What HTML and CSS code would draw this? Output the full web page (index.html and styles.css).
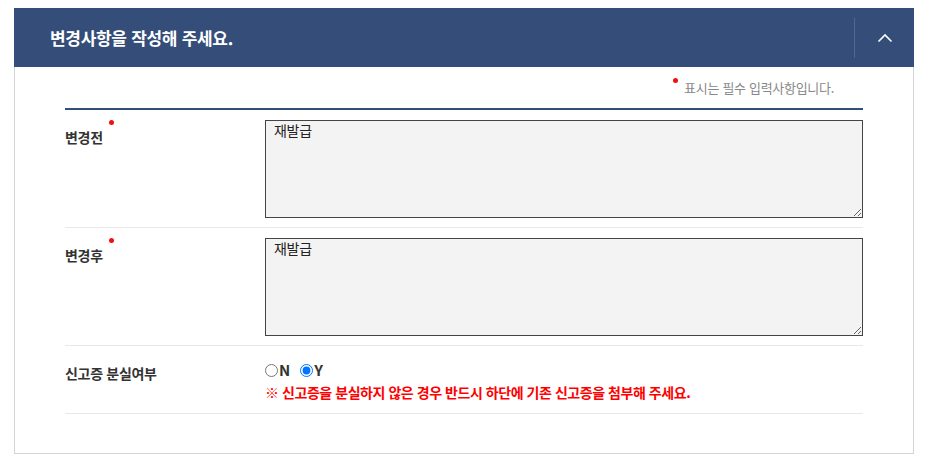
FILE: index.html
```html
<!DOCTYPE html>
<html lang="ko">
<head>
<meta charset="utf-8">
<title>변경사항</title>
<link rel="stylesheet" href="styles.css">
</head>
<body>
<div class="wrap">
  <div class="head">
    <h2 class="head-title">변경사항을 작성해 주세요.</h2>
    <button class="head-toggle" type="button" aria-label="접기">
      <svg width="16" height="10" viewBox="0 0 16 10"><polyline points="1.5,8.5 8,2 14.5,8.5" fill="none" stroke="#fff" stroke-width="1.6"/></svg>
    </button>
  </div>
  <div class="panel">
    <p class="note"><span class="dot note-dot"></span>표시는 필수 입력사항입니다.</p>
    <div class="form">
      <div class="row">
        <div class="label"><span>변경전</span><span class="dot label-dot"></span></div>
        <div class="field"><textarea class="ta">재발급</textarea></div>
      </div>
      <div class="row">
        <div class="label"><span>변경후</span><span class="dot label-dot"></span></div>
        <div class="field"><textarea class="ta">재발급</textarea></div>
      </div>
      <div class="row row-radio">
        <div class="label"><span>신고증 분실여부</span></div>
        <div class="field field-radio">
          <div class="radios">
            <label class="opt"><input type="radio" name="lost" value="N"><span>N</span></label>
            <label class="opt"><input type="radio" name="lost" value="Y" checked><span>Y</span></label>
          </div>
          <p class="warn">※ 신고증을 분실하지 않은 경우 반드시 하단에 기존 신고증을 첨부해 주세요.</p>
        </div>
      </div>
    </div>
  </div>
</div>
</body>
</html>
```

FILE: styles.css
```css
* { box-sizing: border-box; }
html, body { margin: 0; padding: 0; background: #fff; }
body { font-family: "Noto Sans CJK KR", "Noto Sans", sans-serif; color: #333; }

.wrap { width: 900px; margin: 8px auto 0; }

.head {
  height: 59px;
  background: #344d79;
  display: flex;
  align-items: center;
  justify-content: space-between;
}
.head-title {
  margin: 0 0 0 36px;
  font-size: 17px;
  font-weight: 700;
  letter-spacing: -0.3px;
  color: #fff;
  line-height: 20px;
}
.head-toggle {
  width: 60px;
  height: 40px;
  border: 0;
  border-left: 1px solid rgba(255,255,255,0.15);
  background: transparent;
  padding: 0;
  display: flex;
  align-items: center;
  justify-content: center;
  cursor: pointer;
}

.panel {
  border: 1px solid #d5d5d5;
  border-top: 0;
  padding: 0 50px 40px;
  height: 387px;
}

.note {
  margin: 0;
  padding-top: 11px;
  height: 41px;
  display: flex;
  justify-content: flex-end;
  align-items: flex-start;
  font-size: 13px;
  line-height: 20px;
  letter-spacing: -0.3px;
  color: #888;
  padding-right: 29px;
}
.dot {
  display: block;
  width: 5px;
  height: 5px;
  border-radius: 50%;
  background: #f01010;
  flex: none;
}
.note-dot { margin: 0 6px 0 0; }

.form { border-top: 2px solid #344d79; }

.row {
  display: flex;
  border-bottom: 1px solid #e8e8e8;
  padding: 10px 0 9px;
}
.label {
  width: 200px;
  flex: none;
  display: flex;
  align-items: flex-start;
  padding-top: 7px;
  font-size: 14px;
  font-weight: 700;
  line-height: 20px;
  letter-spacing: -0.3px;
  color: #333;
}
.label-dot { margin: -7px 0 0 6px; }
.field { flex: 1; }

.ta {
  display: block;
  width: 100%;
  height: 98px;
  background: #f3f3f3;
  border: 1px solid #444;
  border-radius: 0;
  padding: 0 8px;
  margin: 0;
  font-family: "Noto Sans CJK KR", "Noto Sans", sans-serif;
  font-size: 14px;
  line-height: 19px;
  letter-spacing: -0.3px;
  color: #222;
}

.row-radio { padding: 14px 0 11px; }
.row-radio .label { padding-top: 3px; }
.radios { display: flex; gap: 10px; height: 20px; align-items: center; }
.opt {
  display: flex;
  align-items: center;
  font-size: 15px;
  font-weight: 700;
  color: #333;
  line-height: 20px;
}
.opt input { margin: 0 1px 0 0; width: 13px; height: 13px; }
.warn {
  margin: 2px 0 0;
  font-size: 14px;
  font-weight: 700;
  line-height: 20px;
  letter-spacing: -0.45px;
  color: #f00;
}
```
